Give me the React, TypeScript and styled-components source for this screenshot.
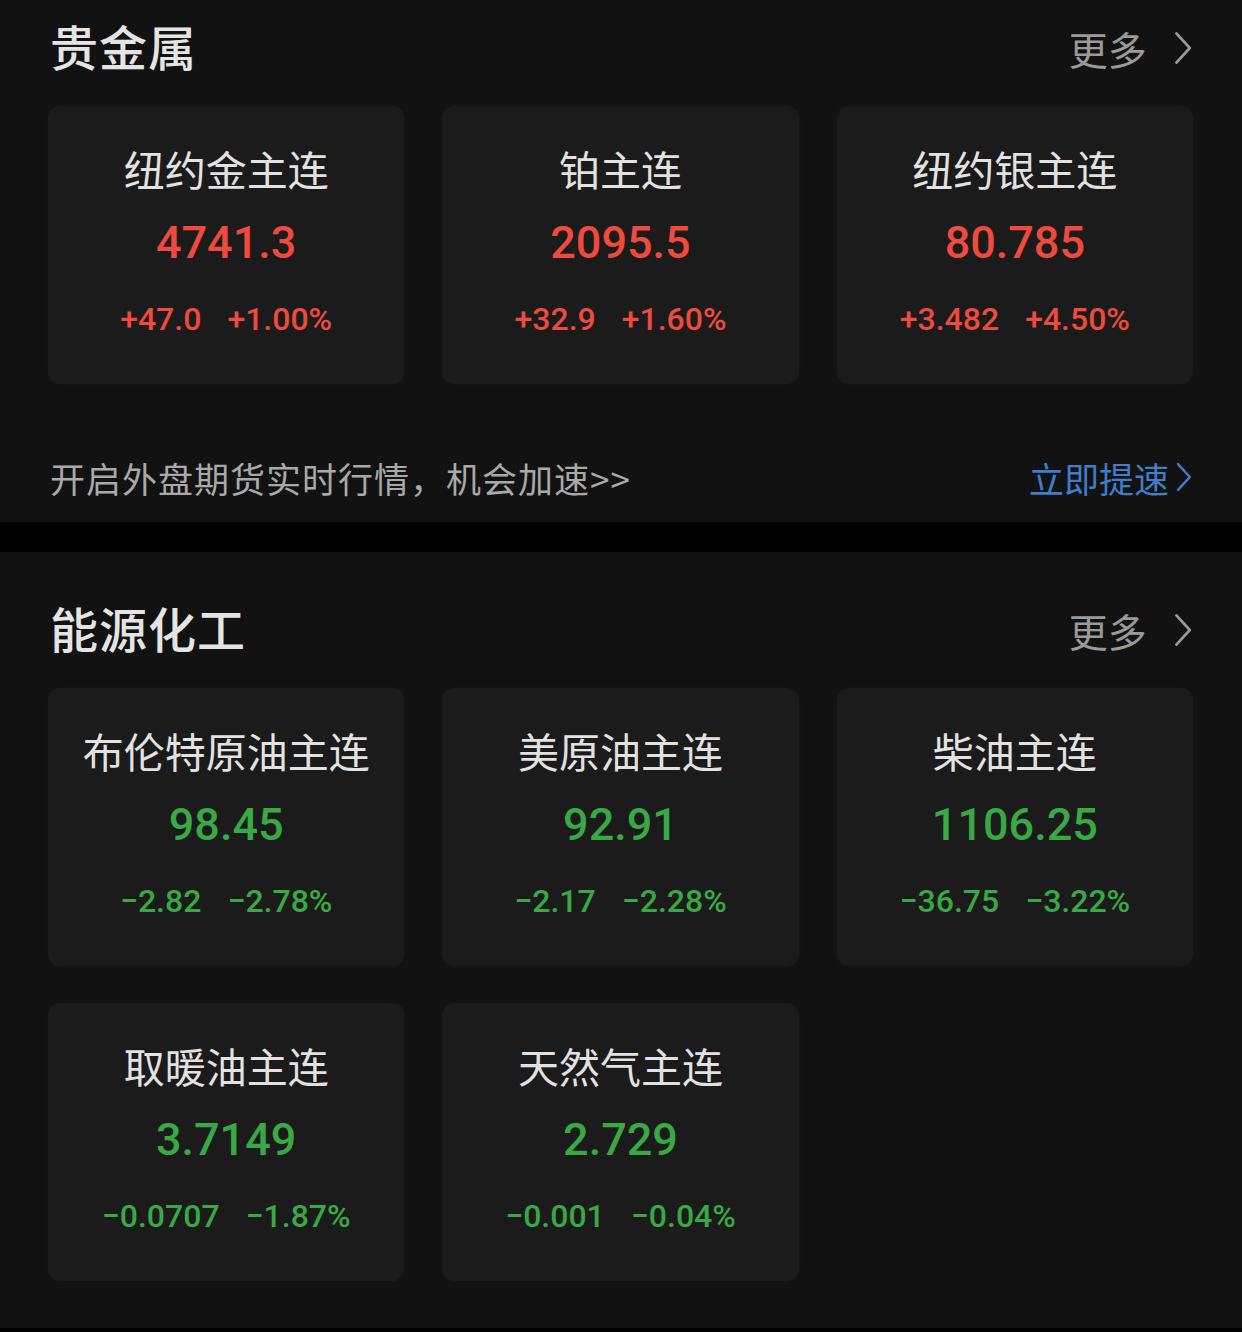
import styled, { createGlobalStyle } from 'styled-components';

type Quote = {
  name: string;
  price: string;
  change: string;
  percent: string;
  up: boolean;
};

const metals: Quote[] = [
  { name: '纽约金主连', price: '4741.3', change: '+47.0', percent: '+1.00%', up: true },
  { name: '铂主连', price: '2095.5', change: '+32.9', percent: '+1.60%', up: true },
  { name: '纽约银主连', price: '80.785', change: '+3.482', percent: '+4.50%', up: true },
];

const energy: Quote[] = [
  { name: '布伦特原油主连', price: '98.45', change: '-2.82', percent: '-2.78%', up: false },
  { name: '美原油主连', price: '92.91', change: '-2.17', percent: '-2.28%', up: false },
  { name: '柴油主连', price: '1106.25', change: '-36.75', percent: '-3.22%', up: false },
  { name: '取暖油主连', price: '3.7149', change: '-0.0707', percent: '-1.87%', up: false },
  { name: '天然气主连', price: '2.729', change: '-0.001', percent: '-0.04%', up: false },
];

const RED = '#ee4a3d';
const GREEN = '#38a944';

const GlobalStyle = createGlobalStyle`
  html, body {
    margin: 0;
    padding: 0;
    background: #000;
  }
  body {
    font-family: 'Noto Sans CJK SC', 'Noto Sans', sans-serif;
  }
`;

function Chevron({ color, size }: { color: string; size: number }) {
  return (
    <svg width={size * 0.56} height={size} viewBox="0 0 18 32" fill="none">
      <polyline
        points="3,3 15,16 3,29"
        stroke={color}
        strokeWidth="2.4"
        strokeLinecap="round"
        strokeLinejoin="round"
      />
    </svg>
  );
}

function QuoteCard({ q }: { q: Quote }) {
  return (
    <Card>
      <Name>{q.name}</Name>
      <Price $up={q.up}>{q.price}</Price>
      <Changes $up={q.up}>
        <span>{q.change.replace('-', '−')}</span>
        <span>{q.percent.replace('-', '−')}</span>
      </Changes>
    </Card>
  );
}

export default function App() {
  return (
    <Page>
      <GlobalStyle />
      <Section $top={0} $bottom={0}>
        <Header>
          <Title>贵金属</Title>
          <More>
            更多
            <Chevron color="#9a9a9a" size={36} />
          </More>
        </Header>
        <Grid>
          {metals.map((q) => (
            <QuoteCard key={q.name} q={q} />
          ))}
        </Grid>
        <Promo>
          <PromoText>开启外盘期货实时行情，机会加速&gt;&gt;</PromoText>
          <PromoLink>
            立即提速
            <Chevron color="#3f7ecb" size={32} />
          </PromoLink>
        </Promo>
      </Section>
      <Divider />
      <Section $top={30} $bottom={47}>
        <Header>
          <Title>能源化工</Title>
          <More>
            更多
            <Chevron color="#9a9a9a" size={36} />
          </More>
        </Header>
        <Grid>
          {energy.map((q) => (
            <QuoteCard key={q.name} q={q} />
          ))}
        </Grid>
      </Section>
      <Bottom />
    </Page>
  );
}

const Page = styled.div`
  width: 1242px;
  background: #121212;
`;

const Section = styled.section<{ $top: number; $bottom: number }>`
  padding: ${(p) => p.$top}px 49px ${(p) => p.$bottom}px 48px;
  background: #121212;
`;

const Header = styled.div`
  display: flex;
  align-items: center;
  justify-content: space-between;
  height: 90px;
  margin-bottom: 16px;
`;

const Title = styled.h2`
  margin: 0;
  padding-left: 2px;
  font-size: 48px;
  font-weight: 500;
  color: #e4e4e4;
  letter-spacing: 1px;
`;

const More = styled.div`
  display: flex;
  align-items: center;
  gap: 26px;
  padding-top: 6px;
  font-size: 39px;
  color: #9a9a9a;
`;

const Grid = styled.div`
  display: grid;
  grid-template-columns: repeat(3, 1fr);
  column-gap: 38px;
  row-gap: 37px;
`;

const Card = styled.div`
  display: flex;
  flex-direction: column;
  align-items: center;
  height: 278px;
  box-sizing: border-box;
  padding-top: 38px;
  background: #1b1b1b;
  border-radius: 12px;
  box-shadow: 0 0 14px rgba(255, 255, 255, 0.025);
`;

const Name = styled.div`
  font-size: 41px;
  line-height: 48px;
  color: #e2e2e2;
  white-space: nowrap;
`;

const Price = styled.div<{ $up: boolean }>`
  margin-top: 25px;
  font-family: Roboto, 'Noto Sans', sans-serif;
  font-size: 45px;
  line-height: 52px;
  font-weight: 500;
  color: ${(p) => (p.$up ? RED : GREEN)};
`;

const Changes = styled.div<{ $up: boolean }>`
  display: flex;
  gap: 26px;
  margin-top: 31px;
  font-family: Roboto, 'Noto Sans', sans-serif;
  font-size: 32px;
  line-height: 38px;
  font-weight: 500;
  color: ${(p) => (p.$up ? RED : GREEN)};
`;

const Promo = styled.div`
  display: flex;
  align-items: center;
  justify-content: space-between;
  height: 46px;
  margin-top: 70px;
  padding-bottom: 22px;
`;

const PromoText = styled.div`
  padding-left: 2px;
  font-size: 35px;
  color: #a9a9a9;
  letter-spacing: 1px;
`;

const PromoLink = styled.div`
  display: flex;
  align-items: center;
  gap: 6px;
  font-size: 35px;
  color: #3f7ecb;
`;

const Divider = styled.div`
  height: 30px;
  background: #000;
`;

const Bottom = styled.div`
  height: 4px;
  background: #000;
`;
